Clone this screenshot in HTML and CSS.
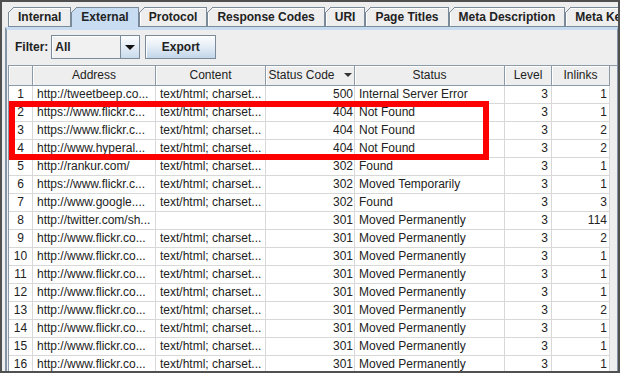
FILE: index.html
```html
<!DOCTYPE html>
<html>
    <head>
        <meta charset="utf-8">
        <link rel="stylesheet" href="styles.css">
    </head>

    <body>
        <div class="window">
            <div class="tabs">
                <div class="tab">Internal</div>
                <div class="tab selected">External</div>
                <div class="tab">Protocol</div>
                <div class="tab">Response Codes</div>
                <div class="tab">URI</div>
                <div class="tab">Page Titles</div>
                <div class="tab">Meta Description</div>
                <div class="tab">Meta Keywords</div>
            </div>

            <div class="panel">
                <div class="filter-row">
                    <span class="filter-label">Filter:</span>
                    <div class="combo">
                        <span class="combo-value">All</span>
                        <span class="combo-button"><span class="combo-arrow"></span></span>
                    </div>
                    <button class="button">Export</button>
                </div>

                <div class="scroll-pane">
                    <table class="grid">
                        <thead>
                            <tr>
                                <th class="col-num"></th>
                                <th class="col-address">Address</th>
                                <th class="col-content">Content</th>
                                <th class="col-code">Status Code<span class="sort-arrow"></span></th>
                                <th class="col-status">Status</th>
                                <th class="col-level">Level</th>
                                <th class="col-inlinks">Inlinks</th>
                            </tr>
                        </thead>
                        <tbody>
                            <tr><td class="num">1</td><td>http://tweetbeep.co...</td><td>text/html; charset...</td><td class="code">500</td><td>Internal Server Error</td><td class="level">3</td><td class="inlinks">1</td></tr>
                            <tr><td class="num">2</td><td>https://www.flickr.c...</td><td>text/html; charset...</td><td class="code">404</td><td>Not Found</td><td class="level">3</td><td class="inlinks">1</td></tr>
                            <tr><td class="num">3</td><td>https://www.flickr.c...</td><td>text/html; charset...</td><td class="code">404</td><td>Not Found</td><td class="level">3</td><td class="inlinks">2</td></tr>
                            <tr><td class="num">4</td><td>http://www.hyperal...</td><td>text/html; charset...</td><td class="code">404</td><td>Not Found</td><td class="level">3</td><td class="inlinks">2</td></tr>
                            <tr><td class="num">5</td><td>http://rankur.com/</td><td>text/html; charset...</td><td class="code">302</td><td>Found</td><td class="level">3</td><td class="inlinks">1</td></tr>
                            <tr><td class="num">6</td><td>https://www.flickr.c...</td><td>text/html; charset...</td><td class="code">302</td><td>Moved Temporarily</td><td class="level">3</td><td class="inlinks">1</td></tr>
                            <tr><td class="num">7</td><td>http://www.google....</td><td>text/html; charset...</td><td class="code">302</td><td>Found</td><td class="level">3</td><td class="inlinks">3</td></tr>
                            <tr><td class="num">8</td><td>http://twitter.com/sh...</td><td></td><td class="code">301</td><td>Moved Permanently</td><td class="level">3</td><td class="inlinks">114</td></tr>
                            <tr><td class="num">9</td><td>http://www.flickr.co...</td><td>text/html; charset...</td><td class="code">301</td><td>Moved Permanently</td><td class="level">3</td><td class="inlinks">2</td></tr>
                            <tr><td class="num">10</td><td>http://www.flickr.co...</td><td>text/html; charset...</td><td class="code">301</td><td>Moved Permanently</td><td class="level">3</td><td class="inlinks">1</td></tr>
                            <tr><td class="num">11</td><td>http://www.flickr.co...</td><td>text/html; charset...</td><td class="code">301</td><td>Moved Permanently</td><td class="level">3</td><td class="inlinks">1</td></tr>
                            <tr><td class="num">12</td><td>http://www.flickr.co...</td><td>text/html; charset...</td><td class="code">301</td><td>Moved Permanently</td><td class="level">3</td><td class="inlinks">1</td></tr>
                            <tr><td class="num">13</td><td>http://www.flickr.co...</td><td>text/html; charset...</td><td class="code">301</td><td>Moved Permanently</td><td class="level">3</td><td class="inlinks">2</td></tr>
                            <tr><td class="num">14</td><td>http://www.flickr.co...</td><td>text/html; charset...</td><td class="code">301</td><td>Moved Permanently</td><td class="level">3</td><td class="inlinks">1</td></tr>
                            <tr><td class="num">15</td><td>http://www.flickr.co...</td><td>text/html; charset...</td><td class="code">301</td><td>Moved Permanently</td><td class="level">3</td><td class="inlinks">1</td></tr>
                            <tr><td class="num">16</td><td>http://www.flickr.co...</td><td>text/html; charset...</td><td class="code">301</td><td>Moved Permanently</td><td class="level">3</td><td class="inlinks">1</td></tr>
                        </tbody>
                    </table>
                </div>
            </div>

            <div class="highlight-box"></div>
        </div>
    </body>
</html>
```

FILE: styles.css
```css
body{
    margin: 0;
    background-color: #eeeeee;
    font-family: "Liberation Sans", Arial, sans-serif;
    font-size: 12px;
    color: #222222;
}

.window{
    position: relative;
    width: 620px;
    height: 373px;
    box-sizing: border-box;
    border: 2px solid #505050;
    padding: 5px 0 0 3px;
    display: flex;
    flex-direction: column;
    overflow: hidden;
}

/* tab strip */
.tabs{
    display: flex;
    padding-left: 3px;
    height: 20px;
    flex-shrink: 0;
    white-space: nowrap;
}

.tab{
    position: relative;
    flex-shrink: 0;
    height: 18px;
    line-height: 19px;
    padding: 0 9px;
    border: 1px solid #7a8a99;
    background-color: #eeeeee;
    box-shadow: inset 1px 1px 0 #ffffff;
    font-weight: bold;
}

.tab::before{
    content: "";
    position: absolute;
    top: -1px;
    left: -1px;
    width: 6px;
    height: 6px;
    background: linear-gradient(135deg, #eeeeee 0 43%, #7a8a99 43% 57%, #eeeeee 57%);
}

.tab.selected{
    border-bottom: none;
    padding-bottom: 1px;
    background-color: #c8ddf2;
    box-shadow: none;
}

.tab.selected::before{
    background: linear-gradient(135deg, #eeeeee 0 43%, #7a8a99 43% 57%, #c8ddf2 57%);
}

/* tab content */
.panel{
    flex: 1;
    min-height: 0;
    display: flex;
    flex-direction: column;
    border-top: 3px solid #c8ddf2;
    border-left: 2px solid #8394a6;
    border-right: 1px solid #8394a6;
    padding-left: 1px;
}

.filter-row{
    display: flex;
    align-items: center;
    height: 24px;
    margin-top: 5px;
    padding-left: 7px;
    flex-shrink: 0;
}

.filter-label{
    font-weight: bold;
    margin-right: 3px;
}

.combo{
    display: flex;
    width: 89px;
    height: 24px;
    box-sizing: border-box;
    border: 1px solid #7a8a99;
    margin-right: 5px;
}

.combo-value{
    flex: 1;
    padding-left: 3px;
    line-height: 22px;
    font-weight: bold;
    background-color: #f1f1f1;
    box-shadow: inset 1px 1px 0 #ffffff;
}

.combo-button{
    width: 18px;
    display: flex;
    align-items: center;
    justify-content: center;
    border-left: 1px solid #7a8a99;
    background: linear-gradient(#fdfeff, #e6eef7 45%, #c9dbec);
}

.combo-arrow{
    width: 0;
    height: 0;
    border-left: 5px solid transparent;
    border-right: 5px solid transparent;
    border-top: 5px solid #111111;
}

.button{
    width: 71px;
    height: 24px;
    padding: 0;
    border: 1px solid #7a8a99;
    background: linear-gradient(#fdfeff, #e9f0f7 40%, #c3d6ea);
    box-shadow: inset 1px 1px 0 #ffffff;
    font-family: inherit;
    font-size: 12px;
    font-weight: bold;
    color: #222222;
}

/* results table */
.scroll-pane{
    flex: 1;
    min-height: 0;
    margin-top: 6px;
    border-top: 1px solid #8c99a6;
    border-left: 1px solid #8c99a6;
    background-color: #eeeeee;
    overflow: hidden;
}

.grid{
    width: 601px;
    table-layout: fixed;
    border-collapse: separate;
    border-spacing: 0;
}

.grid th{
    box-sizing: border-box;
    height: 20px;
    padding: 0;
    line-height: 19px;
    font-weight: normal;
    text-align: center;
    color: #222222;
    background-color: #eeeeee;
    border-right: 1px solid #8c99a6;
    border-bottom: 1px solid #8c99a6;
    box-shadow: inset 1px 1px 0 #ffffff;
    white-space: nowrap;
}

.col-num{ width: 24px; }
.col-address{ width: 123px; }
.col-content{ width: 110px; }
.col-code{ width: 89px; }
.col-status{ width: 150px; }
.col-level{ width: 47px; }
.col-inlinks{ width: 58px; }

.sort-arrow{
    display: inline-block;
    width: 0;
    height: 0;
    margin-left: 9px;
    vertical-align: 2px;
    border-left: 4px solid transparent;
    border-right: 4px solid transparent;
    border-top: 4px solid #333333;
}

.grid td{
    height: 17px;
    padding: 0 4px;
    line-height: 17px;
    background-color: #ffffff;
    border-right: 1px solid #d8d8d8;
    border-bottom: 1px solid #d8d8d8;
    white-space: nowrap;
    overflow: hidden;
}

.grid td.num{
    padding: 0;
    text-align: center;
}

.grid td.code{
    padding: 0 1px 0 0;
    text-align: right;
}

.grid td.level{
    padding: 0 3px 0 0;
    text-align: right;
}

.grid td.inlinks{
    padding: 0 2px 0 0;
    text-align: right;
}

/* annotation drawn over the table */
.highlight-box{
    position: absolute;
    left: 7px;
    top: 99px;
    width: 480px;
    height: 59px;
    box-sizing: border-box;
    border: 6px solid #ff0000;
}
```
